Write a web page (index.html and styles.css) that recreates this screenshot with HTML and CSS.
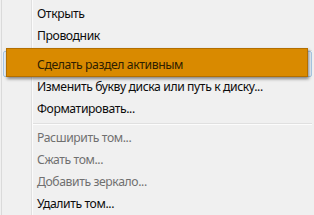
FILE: index.html
```html
<!DOCTYPE html>
<html lang="ru">
<head>
    <meta charset="UTF-8">
    <meta name="viewport" content="width=device-width, initial-scale=1.0">
    <title>Меню тома</title>
    <link rel="stylesheet" href="styles.css">
</head>
<body>
    <div class="menu">
        <div class="menu__gutter"></div>
        <ul class="menu__list">
            <li class="menu__item">Открыть</li>
            <li class="menu__item">Проводник</li>
            <li class="menu__sep"></li>
            <li class="menu__item menu__item--active"><span>Сделать раздел активным</span></li>
            <li class="menu__item">Изменить букву диска или путь к диску...</li>
            <li class="menu__item">Форматировать...</li>
            <li class="menu__sep"></li>
            <li class="menu__item menu__item--disabled">Расширить том...</li>
            <li class="menu__item menu__item--disabled">Сжать том...</li>
            <li class="menu__item menu__item--disabled">Добавить зеркало...</li>
            <li class="menu__item">Удалить том...</li>
        </ul>
    </div>
</body>
</html>
```

FILE: styles.css
```css
html, body {
    margin: 0;
    padding: 0;
    background-color: #f0f0f0;
}
.menu {
    display: flex;
    height: 215px;
    overflow: hidden;
    margin-left: 1px;
    border-left: 1px solid #dadada;
    font-family: "Noto Sans", "Open Sans", sans-serif;
    font-size: 12.2px;
    letter-spacing: -0.4px;
    color: #0c0c0c;
}
.menu .menu__gutter {
    width: 29px;
    flex: none;
}
.menu .menu__list {
    flex: 1;
    list-style: none;
    margin: 0;
    padding: 3px 2px 0 0;
    border-left: 1px solid #e0e0e0;
    box-shadow: inset 1px 0 0 #fbfbfb;
}
.menu .menu__list .menu__item {
    position: relative;
    height: 22px;
    line-height: 22px;
    padding-left: 5px;
    white-space: nowrap;
}
.menu .menu__list .menu__item--disabled {
    color: #707070;
}
.menu .menu__list .menu__sep {
    height: 7px;
    margin-left: 1px;
    background: linear-gradient(#f0f0f0 3px, #e0e0e0 3px, #e0e0e0 4px, #fcfcfc 4px, #fcfcfc 5px, #f0f0f0 5px);
}
.menu .menu__list .menu__item--active::before {
    content: "";
    position: absolute;
    top: -3px;
    bottom: -1px;
    left: -29px;
    right: 0;
    border: 1px solid #a8c6e4;
    border-radius: 2px;
    background-color: #e8f0f8;
}
.menu .menu__list .menu__item--active::after {
    content: "";
    position: absolute;
    top: -6px;
    bottom: -1px;
    left: -26px;
    right: 4px;
    background-color: #d98a00;
    border: 1px solid #b36f00;
    box-shadow: 1px 2px 3px rgba(0, 0, 0, .45);
}
.menu .menu__list .menu__item--active span {
    position: relative;
    z-index: 1;
    color: #2e2000;
}
```
